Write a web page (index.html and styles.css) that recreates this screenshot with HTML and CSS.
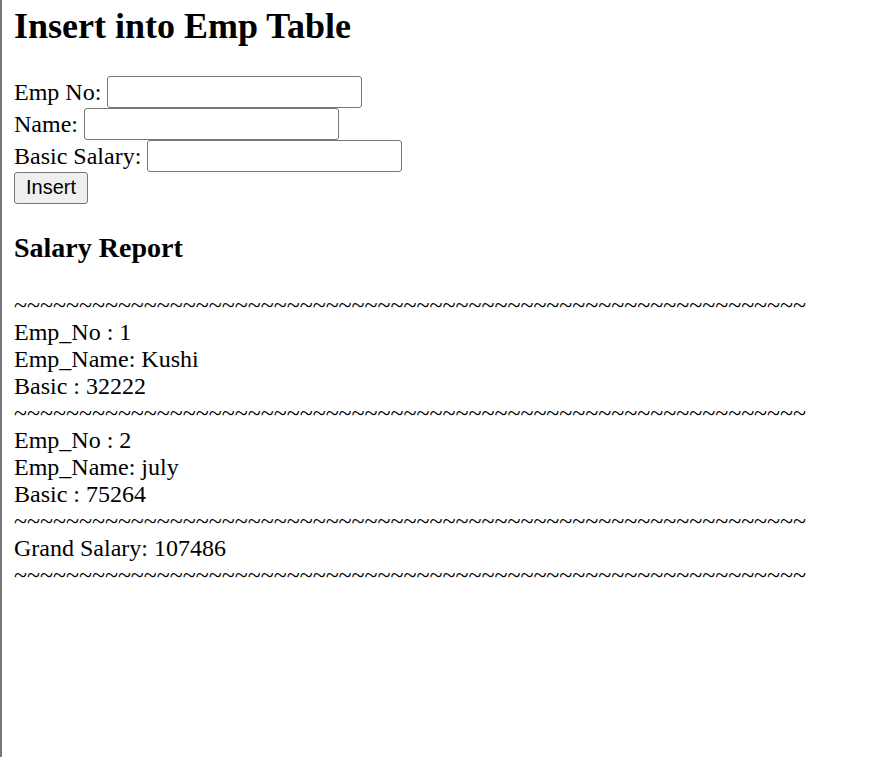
FILE: index.html
```
<!DOCTYPE html>
<html lang="en">
<head>
<meta charset="utf-8">
<title>Insert into Emp Table</title>
<link rel="stylesheet" href="styles.css">
</head>
<body>
<main>
<h2>Insert into Emp Table</h2>
<form>
<div class="field"><label for="empno">Emp No:</label><input type="text" id="empno" name="empno"></div>
<div class="field"><label for="name">Name:</label><input type="text" id="name" name="name"></div>
<div class="field"><label for="salary">Basic Salary:</label><input type="text" id="salary" name="salary"></div>
<button type="submit">Insert</button>
</form>
<h3>Salary Report</h3>
<section class="report">
<div>~~~~~~~~~~~~~~~~~~~~~~~~~~~~~~~~~~~~~~~~~~~~~~~~~~~~~~~~~~~~~</div>
<div>Emp_No : 1</div>
<div>Emp_Name: Kushi</div>
<div>Basic : 32222</div>
<div>~~~~~~~~~~~~~~~~~~~~~~~~~~~~~~~~~~~~~~~~~~~~~~~~~~~~~~~~~~~~~</div>
<div>Emp_No : 2</div>
<div>Emp_Name: july</div>
<div>Basic : 75264</div>
<div>~~~~~~~~~~~~~~~~~~~~~~~~~~~~~~~~~~~~~~~~~~~~~~~~~~~~~~~~~~~~~</div>
<div>Grand Salary: 107486</div>
<div>~~~~~~~~~~~~~~~~~~~~~~~~~~~~~~~~~~~~~~~~~~~~~~~~~~~~~~~~~~~~~</div>
</section>
</main>
</body>
</html>
```
FILE: styles.css
```
body {
  margin: 0;
  background: #fff;
  color: #000;
  font: 24px/27px "Liberation Serif", "Times New Roman", serif;
}

main {
  box-sizing: border-box;
  min-height: 100vh;
  padding: 6px 12px;
  border-left: 2px solid #767676;
}

h2 {
  margin: 0 0 30px;
  font-size: 36px;
  line-height: 40px;
}

h3 {
  margin: 28px 0;
  font-size: 28px;
  line-height: 32px;
}

.field {
  display: flex;
  align-items: center;
  gap: 6px;
}

input {
  box-sizing: border-box;
  width: 255px;
  height: 32px;
  padding: 2px 3px;
  border: 1px solid #767676;
  border-radius: 3px;
  background: #fff;
  font: 20px "Liberation Sans", Arial, sans-serif;
}

button {
  display: block;
  box-sizing: border-box;
  height: 32px;
  padding: 0 11px 2px;
  border: 1px solid #767676;
  border-radius: 3px;
  background: #efefef;
  color: #000;
  font: 20px "Liberation Sans", Arial, sans-serif;
}

.report {
  white-space: nowrap;
}
```
